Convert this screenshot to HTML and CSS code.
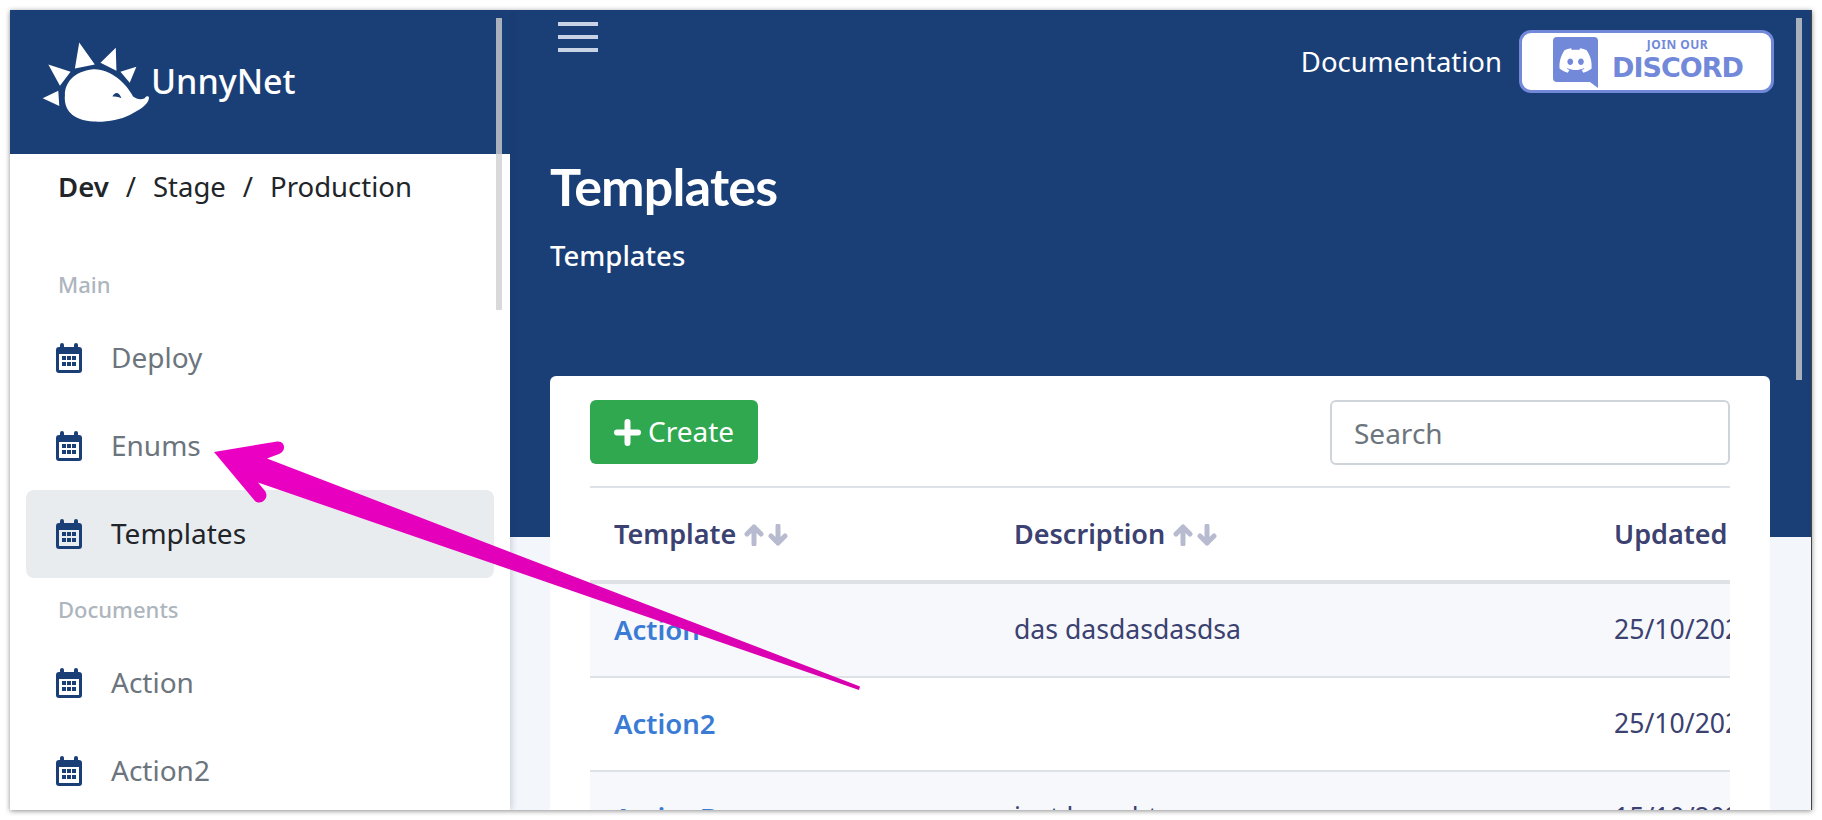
FILE: index.html
```html
<!DOCTYPE html>
<html lang="en">
<head>
  <meta charset="UTF-8" />
  <title>UnnyNet - Templates</title>
  <link rel="stylesheet" href="styles.css">
</head>
<body>

  <svg class="sprite" width="0" height="0">
    <symbol id="cal" viewBox="0 0 26 30">
      <path fill-rule="evenodd" d="M6 0a2 2 0 0 1 2 2v2h10V2a2 2 0 0 1 4 0v2h1a3 3 0 0 1 3 3v20a3 3 0 0 1-3 3H3a3 3 0 0 1-3-3V7a3 3 0 0 1 3-3h1V2a2 2 0 0 1 2-2zM3 11v15.5a.5.5 0 0 0 .5.5h19a.5.5 0 0 0 .5-.5V11z"/>
      <path d="M6 13h4v4H6zM11 13h4v4h-4zM16 13h4v4h-4zM6 19h4v4H6zM11 19h4v4h-4zM16 19h4v4h-4z"/>
    </symbol>
    <symbol id="sort" viewBox="0 0 44 22">
      <path d="M10 20V3M3 10l7-7 7 7M34 2v17M27 12l7 7 7-7" fill="none" stroke="currentColor" stroke-width="5" stroke-linecap="round" stroke-linejoin="round"/>
    </symbol>
  </svg>

  <div class="window">
    <aside class="sidebar">
      <div class="brand">
        <svg class="logo" viewBox="36 36 325 240">
          <path fill="#fff" d="M148 37L135 115L195 103ZM258 53L212 98L260 122ZM320 110L272 125L300 158ZM55 103L90 167L122 125ZM38 205L88 228L85 182Z"/>
          <path fill="#fff" d="M105 195C105 160 130 125 190 118C240 115 290 160 310 200C320 208 335 210 345 205C350 197 358 197 358 205C355 225 330 240 300 255C270 270 230 277 190 275C135 272 100 245 105 195Z"/>
          <path fill="#1a3e76" d="M248 200C255 185 268 185 275 205C265 200 255 200 248 200Z"/>
        </svg>
        <span class="brand-name">UnnyNet</span>
      </div>

      <div class="env">
        <b>Dev</b><span class="slash">/</span>Stage<span class="slash">/</span>Production
      </div>

      <nav class="nav">
        <div class="nav-label nav-label-first">Main</div>
        <a class="nav-item"><svg class="cal"><use href="#cal"/></svg><span class="nav-text">Deploy</span></a>
        <a class="nav-item"><svg class="cal"><use href="#cal"/></svg><span class="nav-text">Enums</span></a>
        <a class="nav-item active"><svg class="cal"><use href="#cal"/></svg><span class="nav-text">Templates</span></a>
        <div class="nav-label">Documents</div>
        <a class="nav-item"><svg class="cal"><use href="#cal"/></svg><span class="nav-text">Action</span></a>
        <a class="nav-item"><svg class="cal"><use href="#cal"/></svg><span class="nav-text">Action2</span></a>
      </nav>

      <div class="thumb thumb-side"></div>
    </aside>

    <main class="main">
      <div class="thumb thumb-main"></div>

      <section class="hero">
        <div class="topbar">
          <div class="burger"><span></span><span></span><span></span></div>
          <a class="doc-link">Documentation</a>
          <a class="discord">
            <svg class="discord-icon" viewBox="0 0 45 51">
              <path fill="#7289da" d="M4 0h37a4 4 0 0 1 4 4v47l-8-6H4a4 4 0 0 1-4-4V4a4 4 0 0 1 4-4z"/>
              <path fill="#fff" fill-rule="evenodd" transform="translate(6.5 7.5) scale(1.34)" d="M20.317 4.3698a19.7913 19.7913 0 00-4.8851-1.5152.0741.0741 0 00-.0785.0371c-.211.3753-.4447.8648-.6083 1.2495-1.8447-.2762-3.68-.2762-5.4868 0-.1636-.3933-.4058-.8742-.6177-1.2495a.077.077 0 00-.0785-.037 19.7363 19.7363 0 00-4.8852 1.515.0699.0699 0 00-.0321.0277C.5334 9.0458-.319 13.5799.0992 18.0578a.0824.0824 0 00.0312.0561c2.0528 1.5076 4.0413 2.4228 5.9929 3.0294a.0777.0777 0 00.0842-.0276c.4616-.6304.8731-1.2952 1.226-1.9942a.076.076 0 00-.0416-.1057c-.6528-.2476-1.2743-.5495-1.8722-.8923a.077.077 0 01-.0076-.1277c.1258-.0943.2517-.1923.3718-.2914a.0743.0743 0 01.0776-.0105c3.9278 1.7933 8.18 1.7933 12.0614 0a.0739.0739 0 01.0785.0095c.1202.099.246.1981.3728.2924a.077.077 0 01-.0066.1276 12.2986 12.2986 0 01-1.873.8914.0766.0766 0 00-.0407.1067c.3604.698.7719 1.3628 1.225 1.9932a.076.076 0 00.0842.0286c1.961-.6067 3.9495-1.5219 6.0023-3.0294a.077.077 0 00.0313-.0552c.5004-5.177-.8382-9.6739-3.5485-13.6604a.061.061 0 00-.0312-.0286zM8.02 15.3312c-1.1825 0-2.1569-1.0857-2.1569-2.419 0-1.3332.9555-2.4189 2.157-2.4189 1.2108 0 2.1757 1.0952 2.1568 2.419 0 1.3332-.9555 2.4189-2.1569 2.4189zm7.9748 0c-1.1825 0-2.1569-1.0857-2.1569-2.419 0-1.3332.9554-2.4189 2.1569-2.4189 1.2108 0 2.1757 1.0952 2.1568 2.419 0 1.3332-.946 2.4189-2.1568 2.4189Z"/>
            </svg>
            <span class="discord-text">
              <span class="discord-join">JOIN OUR</span>
              <span class="discord-name">DISCORD</span>
            </span>
          </a>
        </div>
        <h1>Templates</h1>
        <div class="crumb">Templates</div>
      </section>

      <section class="card">
        <div class="toolbar">
          <button class="btn-create" type="button">
            <svg class="plus" viewBox="0 0 27 27"><path d="M13.5 3v21M3 13.5h21" fill="none" stroke="#fff" stroke-width="6" stroke-linecap="round"/></svg>
            <span class="btn-label">Create</span>
          </button>
          <input class="search" type="text" placeholder="Search">
        </div>

        <div class="table-wrap">
          <table>
            <thead>
              <tr>
                <th class="col-name">Template <svg class="sort"><use href="#sort"/></svg></th>
                <th class="col-desc">Description <svg class="sort"><use href="#sort"/></svg></th>
                <th class="col-date">Updated at</th>
              </tr>
            </thead>
            <tbody>
              <tr>
                <td><a>Action</a></td>
                <td>das dasdasdasdsa</td>
                <td>25/10/2021</td>
              </tr>
              <tr>
                <td><a>Action2</a></td>
                <td></td>
                <td>25/10/2021</td>
              </tr>
              <tr>
                <td><a>ActionB</a></td>
                <td>just bought</td>
                <td>15/10/2021</td>
              </tr>
            </tbody>
          </table>
        </div>
      </section>
    </main>
  </div>

  <!-- annotation drawn on top of the screenshot -->
  <svg class="annotation" viewBox="0 0 1822 820">
    <defs>
      <linearGradient id="arrowFill" x1="0" y1="0" x2="0" y2="1">
        <stop offset="0" stop-color="#ec00c4"/>
        <stop offset="1" stop-color="#d800ae"/>
      </linearGradient>
    </defs>
    <path fill="url(#arrowFill)" d="M214 452L277 441.500C285 440.500 287 451 279 454L267 458.500L860 686.500L859 690L258 482.500L265 491C270 498 261 506 255 501Z"/>
  </svg>

</body>
</html>
```

FILE: styles.css
```css
* {
  box-sizing: border-box;
}

body {
  margin: 0;
  height: 820px;
  overflow: hidden;
  background: white;
  font-family: "Noto Sans", sans-serif;
  font-size: 28px;
  padding: 10px;
  position: relative;
}

.sprite {
  position: absolute;
}

.window {
  display: flex;
  width: 1802px;
  height: 800px;
  overflow: hidden;
  background: #f3f6fb;
  border-right: 1px solid #444;
  box-shadow: 0 1px 5px rgba(0,0,0,0.45);
}

/* sidebar */
.sidebar {
  width: 500px;
  flex: none;
  background: white;
  position: relative;
  z-index: 1;
  box-shadow: 2px 0 6px rgba(40,50,90,0.18);
}

.brand {
  height: 144px;
  background: #1a3e76;
  display: flex;
  align-items: center;
  padding: 0 0 0 32px;
  color: white;
}

.logo {
  width: 108px;
  height: 80px;
  flex: none;
}

.brand-name {
  font-size: 34px;
  font-weight: 500;
  margin: 0 0 2px 1px;
}

.env {
  height: 96px;
  padding: 13px 0 0 48px;
  font-size: 27.5px;
  line-height: 40px;
  color: #212529;
}

.env b {
  font-weight: 600;
}

.slash {
  margin: 0 17px;
}

.nav {
  padding: 0 16px;
}

.nav-label {
  height: 61px;
  padding: 16px 0 0 32px;
  font-size: 22px;
  font-weight: 500;
  line-height: 30px;
  color: #adb5bd;
}

.nav-label-first {
  height: 64px;
  padding-top: 19px;
}

.nav-item {
  display: flex;
  align-items: center;
  height: 88px;
  padding-left: 30px;
  gap: 29px;
  color: #6c757d;
  border-radius: 8px;
}

.nav-text {
  margin-bottom: 2px;
}

.nav-item.active {
  background: #e9ecef;
  color: #212529;
}

.cal {
  width: 26px;
  height: 30px;
  fill: #1a3e76;
  flex: none;
}

.thumb {
  position: absolute;
  width: 6px;
  top: 8px;
}

.thumb-side {
  right: 8px;
  height: 292px;
  background: linear-gradient(#a9b1bd 0 136px, #d9d9db 136px);
}

.thumb-main {
  right: 9px;
  height: 362px;
  background: #a9b1bd;
  z-index: 2;
}

/* main column */
.main {
  flex: 1;
  min-width: 0;
  position: relative;
}

.hero {
  height: 527px;
  background: #1a3e76;
  color: white;
  padding: 12px 0 0 40px;
}

.topbar {
  display: flex;
  align-items: flex-start;
  padding-right: 37px;
}

.burger {
  width: 40px;
  margin-left: 8px;
  margin-right: auto;
}

.burger span {
  display: block;
  height: 4px;
  margin-bottom: 9px;
  background: #c9d3e6;
}

.doc-link {
  margin-top: 21px;
  font-size: 27.5px;
  line-height: 38px;
}

.discord {
  display: flex;
  align-items: flex-start;
  width: 255px;
  height: 63px;
  margin: 8px 0 0 17px;
  padding: 4px 0 0 31px;
  background: white;
  border: 3px solid #7289da;
  border-radius: 12px;
  color: #7289da;
}

.discord-icon {
  width: 45px;
  height: 51px;
  flex: none;
}

.discord-text {
  display: flex;
  flex-direction: column;
  align-items: center;
  margin-left: 15px;
  width: 129px;
}

.discord-join {
  font-size: 12px;
  font-weight: 700;
  line-height: 16px;
  letter-spacing: 0.5px;
}

.discord-name {
  font-family: "DejaVu Sans", sans-serif;
  font-size: 27px;
  font-weight: 700;
  line-height: 30px;
  letter-spacing: -1px;
}

h1 {
  margin: 62px 0 0;
  font-family: Lato, sans-serif;
  font-size: 52px;
  font-weight: 700;
  line-height: 62px;
  letter-spacing: -0.8px;
}

.crumb {
  margin-top: 21px;
  font-weight: 500;
  font-size: 27.5px;
  line-height: 36px;
}

/* card and table */
.card {
  margin: -161px 41px 0 40px;
  padding: 24px 40px 0;
  background: white;
  border-radius: 6px 6px 0 0;
  position: relative;
}

.toolbar {
  display: flex;
  justify-content: space-between;
  height: 88px;
  border-bottom: 2px solid #dee2e6;
}

.btn-create {
  display: flex;
  align-items: center;
  gap: 7px;
  width: 168px;
  height: 64px;
  padding: 0 0 0 24px;
  background: #2fa84f;
  color: white;
  font: inherit;
  border: none;
  border-radius: 6px;
}

.btn-label {
  margin-bottom: 2px;
}

.plus {
  width: 27px;
  height: 27px;
}

.search {
  width: 400px;
  height: 65px;
  padding: 0 22px;
  font: inherit;
  background: white;
  border: 2px solid #ced4da;
  border-radius: 6px;
}

.search::placeholder {
  color: #6c757d;
  opacity: 1;
}

.table-wrap {
  overflow: hidden;
}

table {
  table-layout: fixed;
  width: 1300px;
  border-spacing: 0;
  color: #3b4170;
}

.col-name {
  width: 400px;
}

.col-desc {
  width: 600px;
}

th {
  height: 96px;
  padding: 0 24px 2px;
  text-align: left;
  font-size: 27px;
  font-weight: 600;
  white-space: nowrap;
  border-bottom: 4px solid #dee2e6;
}

td {
  height: 94px;
  padding: 0 24px 2px;
  font-size: 26.6px;
  white-space: nowrap;
  border-bottom: 2px solid #dee2e6;
}

tbody tr:nth-child(odd) td {
  background: #f6f8fb;
}

td a {
  color: #3a7bd5;
  font-size: 27.5px;
  font-weight: 600;
}

.sort {
  width: 44px;
  height: 22px;
  margin-left: 1px;
  color: #b8bbd0;
  vertical-align: -2px;
}

/* pink arrow */
.annotation {
  position: absolute;
  left: 0;
  top: 0;
  width: 1822px;
  height: 820px;
  pointer-events: none;
  z-index: 5;
}
```
